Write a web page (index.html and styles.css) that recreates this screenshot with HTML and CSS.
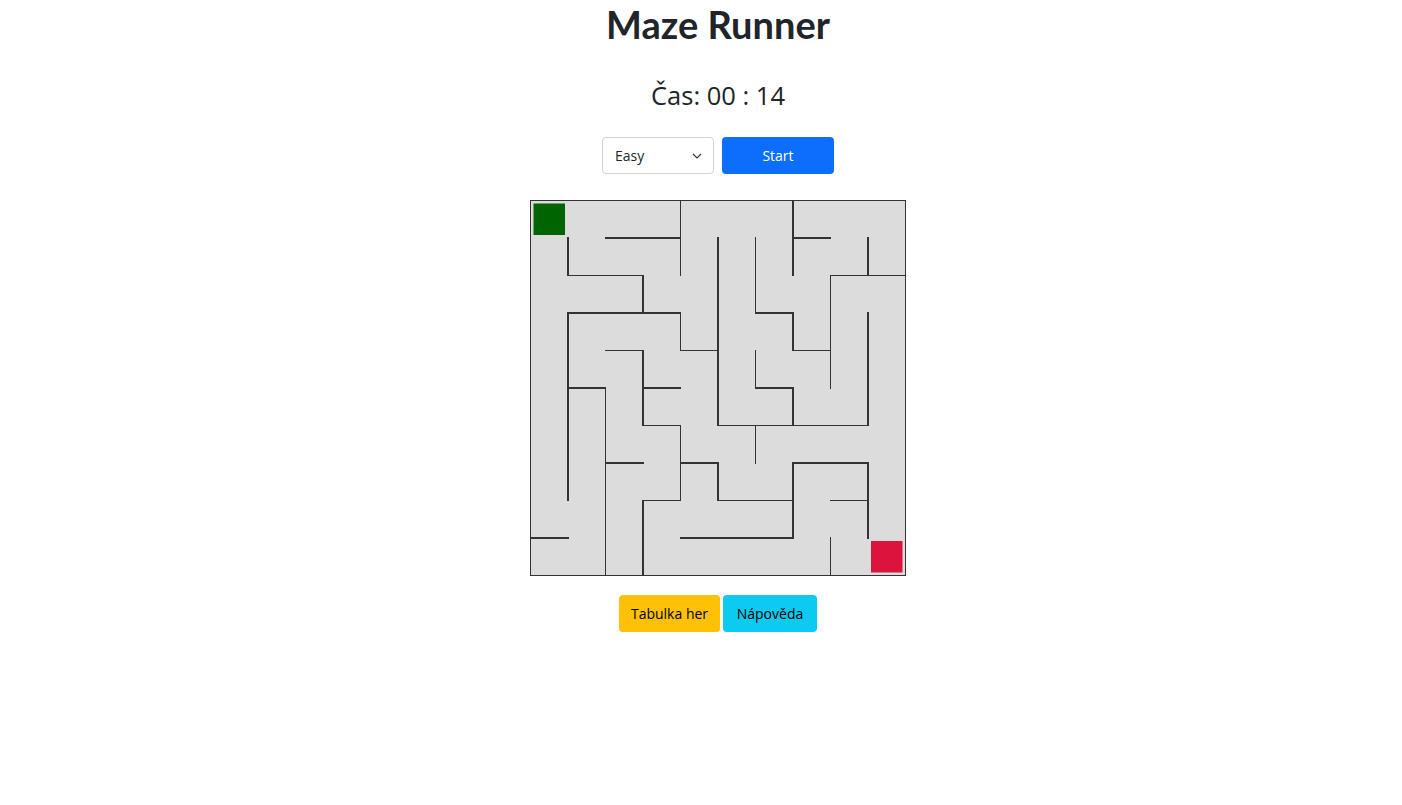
FILE: index.html
```html
<!DOCTYPE html>
<html lang="cs">
<head>
<meta charset="utf-8">
<title>Maze Runner</title>
<link rel="stylesheet" href="styles.css">
</head>
<body>
<main class="app">
  <h1 class="title">Maze Runner</h1>
  <div class="timer">Čas: 00 : 14</div>
  <div class="controls">
    <div class="select-wrap">
      <select class="level">
        <option>Easy</option>
        <option>Medium</option>
        <option>Hard</option>
      </select>
      <svg class="chevron" width="10" height="6" viewBox="0 0 10 6"><path d="M1 1 L5 5 L9 1" fill="none" stroke="#343a40" stroke-width="1.2"/></svg>
    </div>
    <button class="btn btn-start">Start</button>
  </div>
  <svg class="maze" width="376" height="376" viewBox="0 0 376 376">
    <rect x="0" y="0" width="376" height="376" fill="#dcdcdc"/>
    <rect class="start" x="3.5" y="3.5" width="31.5" height="31.5"/>
    <rect class="goal" x="341" y="341" width="31.5" height="31.5"/>
    <g transform="translate(0.5 0.5) scale(37.5)" class="walls">
      <rect x="0" y="0" width="10" height="10" fill="none"/>
      <path d="M2 1H4 M7 1H8
               M1 2H3 M8 2H10
               M1 3H4 M6 3H7
               M4 4H5 M2 4H3 M7 4H8
               M1 5H2 M3 5H4 M6 5H7
               M3 6H4 M5 6H9
               M2 7H3 M4 7H5 M7 7H9
               M3 8H4 M5 8H7 M8 8H9
               M0 9H1 M4 9H7"/>
      <path d="M4 0V2 M1 1V2 M3 2V3
               M1 3V8 M4 3V4 M5 1V6
               M6 1V3 M7 3V4 M7 0V2 M9 1V2
               M8 2V5 M9 3V6 M6 4V5 M7 5V6
               M3 4V6 M2 5V10 M4 6V8 M5 7V8
               M3 8V10 M6 6V7 M7 7V9 M9 7V9 M8 9V10"/>
    </g>
  </svg>
  <div class="actions">
    <button class="btn btn-warning">Tabulka her</button>
    <button class="btn btn-info">Nápověda</button>
  </div>
</main>
</body>
</html>
```
FILE: styles.css
```css
* { box-sizing: border-box; }
body {
  margin: 0;
  background: #fff;
  color: #212529;
  font-family: "Open Sans", "Noto Sans", "Liberation Sans", sans-serif;
}
.app {
  display: flex;
  flex-direction: column;
  align-items: center;
  padding-left: 34px;
}
.title {
  margin: 0;
  font-family: Lato, "Open Sans", sans-serif;
  font-size: 38px;
  font-weight: 700;
  line-height: 48px;
}
.timer {
  margin-top: 30px;
  font-size: 25.5px;
  line-height: 34px;
}
.controls {
  margin-top: 25px;
  display: flex;
  gap: 8px;
}
.select-wrap {
  position: relative;
  width: 112px;
  height: 37px;
}
.level {
  appearance: none;
  -webkit-appearance: none;
  width: 100%;
  height: 100%;
  border: 1px solid #ced4da;
  border-radius: 4px;
  background: #fff;
  padding: 0 12px;
  font-family: inherit;
  font-size: 14px;
  color: #212529;
}
.chevron {
  position: absolute;
  right: 12px;
  top: 16px;
  pointer-events: none;
}
.btn {
  border: none;
  border-radius: 4px;
  font-family: inherit;
  font-size: 14px;
  height: 37px;
  padding: 0 4px;
  white-space: nowrap;
  cursor: pointer;
}
.btn-start {
  width: 112px;
  background: #0d6efd;
  color: #fff;
}
.maze {
  margin-top: 26px;
  display: block;
}
.walls rect, .walls path {
  stroke: #333;
  stroke-width: 0.0267;
  fill: none;
  stroke-linecap: square;
  shape-rendering: crispEdges;
}
.start { fill: #006400; }
.goal { fill: #dc143c; }
.actions {
  margin-top: 19px;
  display: flex;
  gap: 3px;
}
.btn-warning {
  width: 101px;
  background: #ffc107;
  color: #000;
}
.btn-info {
  width: 94px;
  background: #0dcaf0;
  color: #000;
}
```
